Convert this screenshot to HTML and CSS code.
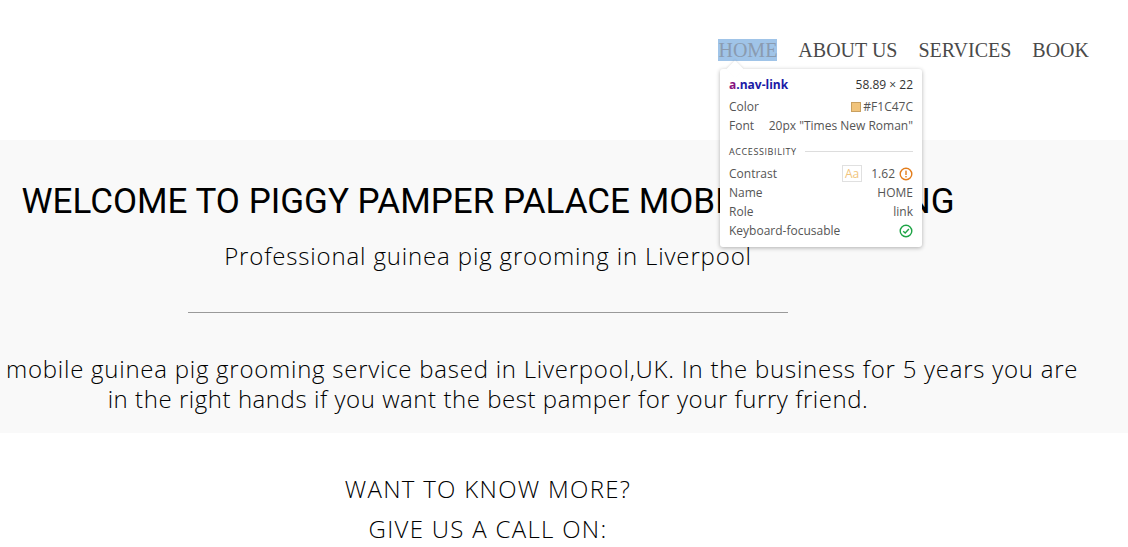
FILE: index.html
```html
<!DOCTYPE html>
<html>
<head>
<meta charset="utf-8">
<link rel="stylesheet" href="styles.css">
</head>
<body>
<header class="top">
  <nav class="nav">
    <a class="nav-link nav-link--active" href="#">HOME</a>
    <a class="nav-link" href="#">ABOUT US</a>
    <a class="nav-link" href="#">SERVICES</a>
    <a class="nav-link" href="#">BOOK</a>
  </nav>
</header>

<section class="hero">
  <div class="hero-inner">
    <h1 class="hero-title">WELCOME TO PIGGY PAMPER PALACE MOBILE GROOMING</h1>
    <p class="hero-sub">Professional guinea pig grooming in Liverpool</p>
    <hr class="hero-rule">
  </div>
  <p class="about">
    <span class="about-first">mobile guinea pig grooming service based in Liverpool,UK. In the business for 5 years you are</span>
    <span class="about-second">in the right hands if you want the best pamper for your furry friend.</span>
  </p>
</section>

<section class="contact">
  <p class="contact-line">WANT TO KNOW MORE?</p>
  <p class="contact-line">GIVE US A CALL ON:</p>
</section>

<div class="tip">
  <div class="tip-arrow"></div>
  <div class="tip-row tip-head">
    <span class="tip-sel"><span class="tip-tag">a</span>.nav-link</span>
    <span class="tip-val">58.89 × 22</span>
  </div>
  <div class="tip-row tip-color">
    <span class="tip-key">Color</span>
    <span class="tip-val"><span class="swatch"></span>#F1C47C</span>
  </div>
  <div class="tip-row">
    <span class="tip-key">Font</span>
    <span class="tip-val">20px "Times New Roman"</span>
  </div>
  <div class="tip-section">ACCESSIBILITY</div>
  <div class="tip-row">
    <span class="tip-key">Contrast</span>
    <span class="tip-val"><span class="aa">Aa</span>1.62<svg class="ico" width="14" height="14" viewBox="0 0 14 14"><circle cx="7" cy="7" r="5.8" fill="none" stroke="#e37d1b" stroke-width="1.4"/><rect x="6.3" y="3.6" width="1.4" height="4.4" fill="#e37d1b"/><rect x="6.3" y="9" width="1.4" height="1.4" fill="#e37d1b"/></svg></span>
  </div>
  <div class="tip-row">
    <span class="tip-key">Name</span>
    <span class="tip-val">HOME</span>
  </div>
  <div class="tip-row">
    <span class="tip-key">Role</span>
    <span class="tip-val">link</span>
  </div>
  <div class="tip-row">
    <span class="tip-key">Keyboard-focusable</span>
    <span class="tip-val"><svg class="ico" width="14" height="14" viewBox="0 0 14 14"><circle cx="7" cy="7" r="5.8" fill="none" stroke="#1ea446" stroke-width="1.4"/><path d="M4.2 7.2 L6.2 9.1 L9.9 5.1" fill="none" stroke="#1ea446" stroke-width="1.4"/></svg></span>
  </div>
</div>
</body>
</html>
```

FILE: styles.css
```css
* { box-sizing: border-box; }
html, body { margin: 0; padding: 0; }
body {
  background: #ffffff;
  width: 1128px;
  height: 547px;
  overflow: hidden;
  position: relative;
  font-family: "Open Sans", "Lato", sans-serif;
  color: #000;
}

.top {
  height: 140px;
  display: flex;
  justify-content: flex-end;
  align-items: flex-start;
  padding: 39px 39px 0 0;
}
.nav {
  display: flex;
  gap: 21px;
}
.nav-link {
  font-family: "Liberation Serif", "Times New Roman", serif;
  font-size: 20px;
  line-height: 22px;
  color: #4a4a4a;
  text-decoration: none;
}
.nav-link--active {
  background: #a0c4e8;
  color: #8a9bb0;
}

.hero {
  background: #f9f9f9;
  height: 293px;
  padding-top: 1px;
}
.hero-inner {
  width: 976px;
  display: flex;
  flex-direction: column;
  align-items: center;
}
.hero-title {
  font-family: "Roboto", sans-serif;
  font-weight: 400;
  font-size: 35px;
  line-height: 40px;
  margin: 41px 0 0;
  white-space: nowrap;
}
.hero-sub {
  font-size: 24px;
  font-weight: 300;
  line-height: 30px;
  letter-spacing: 0.85px;
  margin: 19px 0 0;
}
.hero-rule {
  width: 600px;
  border: 0;
  border-top: 1px solid #9a9a9a;
  margin: 41px 0 0;
}
.about {
  margin: 41px 0 0;
  font-size: 24px;
  font-weight: 300;
  line-height: 30px;
}
.about-first {
  display: block;
  padding-left: 6px;
  white-space: nowrap;
  letter-spacing: 0.75px;
}
.about-second {
  display: block;
  width: 976px;
  text-align: center;
  letter-spacing: 0.55px;
}

.contact {
  display: flex;
  flex-direction: column;
  align-items: center;
  width: 976px;
  padding-top: 41px;
  gap: 10px;
}
.contact-line {
  margin: 0;
  font-size: 24px;
  font-weight: 300;
  line-height: 30px;
  letter-spacing: 1.3px;
}

.tip {
  position: absolute;
  left: 720px;
  top: 69px;
  width: 202px;
  height: 178px;
  background: #fff;
  border-radius: 3px;
  box-shadow: 0 1px 4px rgba(0,0,0,0.3);
  padding: 4px 9px 0 9px;
  font-family: "Open Sans", "Noto Sans", sans-serif;
  font-size: 12px;
  color: #555;
}
.tip-arrow {
  position: absolute;
  left: 9px;
  top: -6px;
  width: 12px;
  height: 12px;
  background: #fff;
  transform: rotate(45deg);
  box-shadow: -1px -1px 2px rgba(0,0,0,0.08);
}
.tip-row {
  position: relative;
  display: flex;
  justify-content: space-between;
  align-items: center;
  height: 19px;
}
.tip-head { height: 22px; }
.tip-color { margin-top: 2px; }
.tip-sel {
  font-weight: 700;
  color: #1a1aa6;
}
.tip-tag { color: #881280; }
.tip-head .tip-val { color: #333; }
.tip-key { color: #555; }
.tip-val {
  display: flex;
  align-items: center;
  gap: 4px;
  color: #555;
}
.swatch {
  width: 10px;
  height: 10px;
  background: #f1c47c;
  border: 1px solid #c9a060;
  margin-right: -2px;
}
.tip-section {
  display: flex;
  align-items: center;
  gap: 8px;
  font-size: 9px;
  letter-spacing: 0.6px;
  color: #444;
  height: 29px;
  padding-top: 4px;
}
.tip-section::after {
  content: "";
  flex: 1;
  border-top: 1px solid #ddd;
}
.aa {
  color: #f1c47c;
  border: 1px solid #e0e0e0;
  padding: 0 2px;
  line-height: 15px;
  margin-right: 5px;
}
.ico { display: block; }
```
